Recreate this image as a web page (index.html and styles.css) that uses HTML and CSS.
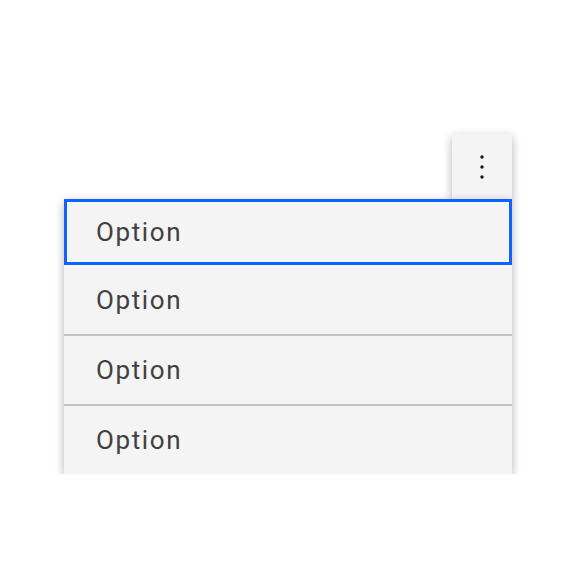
FILE: index.html
```html
<!DOCTYPE html>
<html lang="en">
<head>
<meta charset="utf-8">
<title>Overflow menu</title>
<link rel="stylesheet" href="styles.css">
</head>
<body>
<div class="stage">
  <div class="overflow">
    <button class="trigger" aria-label="Options">
      <svg width="6" height="26" viewBox="0 0 6 26" aria-hidden="true">
        <circle cx="3" cy="3" r="1.7" fill="#161616"/>
        <circle cx="3" cy="13" r="1.7" fill="#161616"/>
        <circle cx="3" cy="23" r="1.7" fill="#161616"/>
      </svg>
    </button>
    <ul class="menu">
      <li class="item item-focus">Option</li>
      <li class="item item-2">Option</li>
      <li class="item item-div">Option</li>
      <li class="item item-div">Option</li>
    </ul>
  </div>
</div>
</body>
</html>
```
FILE: styles.css
```css
html, body {
  margin: 0;
  padding: 0;
  background: #ffffff;
}
.stage {
  padding: 134px 0 0 64px;
}
.overflow {
  width: 448px;
  display: flex;
  flex-direction: column;
  align-items: flex-end;
}
.trigger {
  width: 60px;
  height: 65px;
  border: 0;
  padding: 0;
  margin: 0;
  background: #f4f4f4;
  box-shadow: 0 3px 9px rgba(0, 0, 0, 0.3);
  display: flex;
  align-items: center;
  justify-content: center;
  position: relative;
  z-index: 1;
}
.menu {
  list-style: none;
  margin: 0;
  padding: 0;
  width: 448px;
  background: #f4f4f4;
  box-shadow: 0 3px 9px rgba(0, 0, 0, 0.3);
  position: relative;
  z-index: 2;
}
.item {
  box-sizing: border-box;
  height: 70px;
  display: flex;
  align-items: center;
  padding-left: 32px;
  font-family: Roboto, "Noto Sans", sans-serif;
  font-size: 26px;
  letter-spacing: 1.6px;
  color: #404040;
}
.item-focus {
  height: 66px;
  outline: 3px solid #0f62fe;
  outline-offset: -3px;
}
.item-2 {
  height: 69px;
}
.item-div {
  border-top: 2px solid #c2c2c2;
  padding-bottom: 1px;
}
```
